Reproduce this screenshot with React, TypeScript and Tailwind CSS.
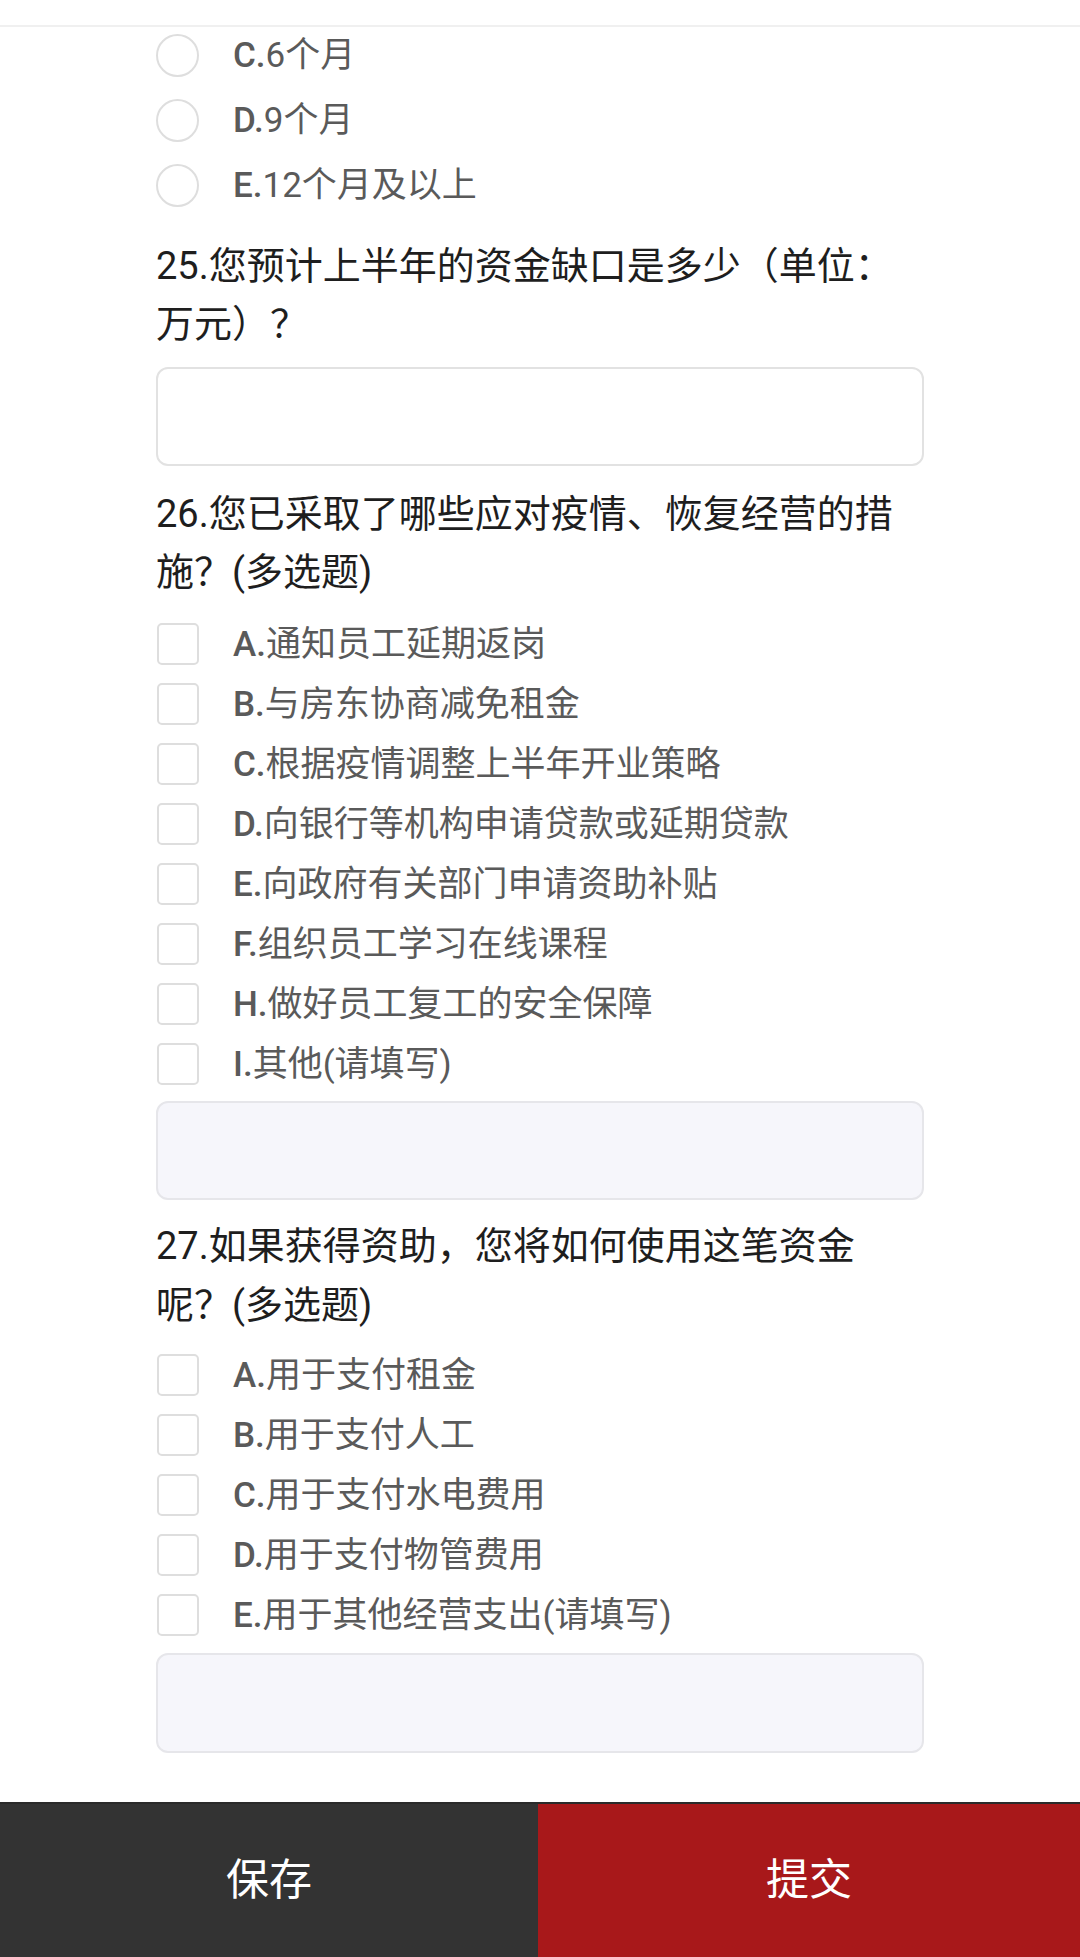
const font = { fontFamily: 'Roboto, "Noto Sans CJK SC", sans-serif' }

type Opt = { key: string; label: string }

const radios: Opt[] = [
  { key: "C.", label: "6个月" },
  { key: "D.", label: "9个月" },
  { key: "E.", label: "12个月及以上" },
]

const q26: Opt[] = [
  { key: "A.", label: "通知员工延期返岗" },
  { key: "B.", label: "与房东协商减免租金" },
  { key: "C.", label: "根据疫情调整上半年开业策略" },
  { key: "D.", label: "向银行等机构申请贷款或延期贷款" },
  { key: "E.", label: "向政府有关部门申请资助补贴" },
  { key: "F.", label: "组织员工学习在线课程" },
  { key: "H.", label: "做好员工复工的安全保障" },
  { key: "I.", label: "其他(请填写)" },
]

const q27: Opt[] = [
  { key: "A.", label: "用于支付租金" },
  { key: "B.", label: "用于支付人工" },
  { key: "C.", label: "用于支付水电费用" },
  { key: "D.", label: "用于支付物管费用" },
  { key: "E.", label: "用于其他经营支出(请填写)" },
]

function RadioRow({ opt }: { opt: Opt }) {
  return (
    <div className="flex h-[65px] items-center">
      <span className="h-[43px] w-[43px] shrink-0 rounded-full border-2 border-[#dedede] bg-white" />
      <span className="ml-[34px] text-[35px] leading-none text-[#5a5a5a]">
        <span className="font-medium">{opt.key}</span>
        {opt.label}
      </span>
    </div>
  )
}

function CheckRow({ opt }: { opt: Opt }) {
  return (
    <div className="flex h-[60px] items-center">
      <span className="ml-px h-[42px] w-[42px] shrink-0 rounded-[5px] border-2 border-[#dedede] bg-white" />
      <span className="ml-[34px] text-[35px] leading-none text-[#5a5a5a]">
        <span className="font-medium">{opt.key}</span>
        {opt.label}
      </span>
    </div>
  )
}

export default function App() {
  return (
    <div style={font} className="relative flex min-h-[1957px] w-[1080px] flex-col bg-white">
      {/* header edge, scrolled content passes under it */}
      <div className="absolute left-0 right-0 top-0 h-[27px] border-b-2 border-[#f0f0f0] bg-white" />

      <div className="flex-1 pl-[156px] pt-[23px]">
        <div className="w-[768px]">
          {radios.map((o) => (
            <RadioRow key={o.key} opt={o} />
          ))}

          <p className="mt-[19px] text-[38px] leading-[58px] text-[#1e1e1e]">
            25.您预计上半年的资金缺口是多少（单位：
            <br />
            万元）？
          </p>
          <div className="mt-[14px] h-[99px] rounded-[12px] border-2 border-[#e2e2e2] bg-white" />

          <p className="mt-[19px] text-[38px] leading-[58px] text-[#1e1e1e]">
            26.您已采取了哪些应对疫情、恢复经营的措
            <br />
            施？(多选题)
          </p>
          <div className="mt-[13px]">
            {q26.map((o) => (
              <CheckRow key={o.key} opt={o} />
            ))}
          </div>
          <div className="mt-[7px] h-[99px] rounded-[12px] border-2 border-[#e6e6ea] bg-[#f6f6fb]" />

          <p className="mt-[17px] text-[38px] leading-[59px] text-[#1e1e1e]">
            27.如果获得资助，您将如何使用这笔资金
            <br />
            呢？(多选题)
          </p>
          <div className="mt-[10px]">
            {q27.map((o) => (
              <CheckRow key={o.key} opt={o} />
            ))}
          </div>
          <div className="mt-[8px] h-[100px] rounded-[12px] border-2 border-[#e6e6ea] bg-[#f6f6fb]" />
        </div>
      </div>

      <div className="flex h-[155px] border-t-2 border-[#2a2a2a]">
        <button className="flex w-[538px] items-center justify-center bg-[#333333] text-[43px] text-white">
          保存
        </button>
        <button className="flex flex-1 items-center justify-center bg-[#a8181a] text-[43px] text-white">
          提交
        </button>
      </div>
    </div>
  )
}
